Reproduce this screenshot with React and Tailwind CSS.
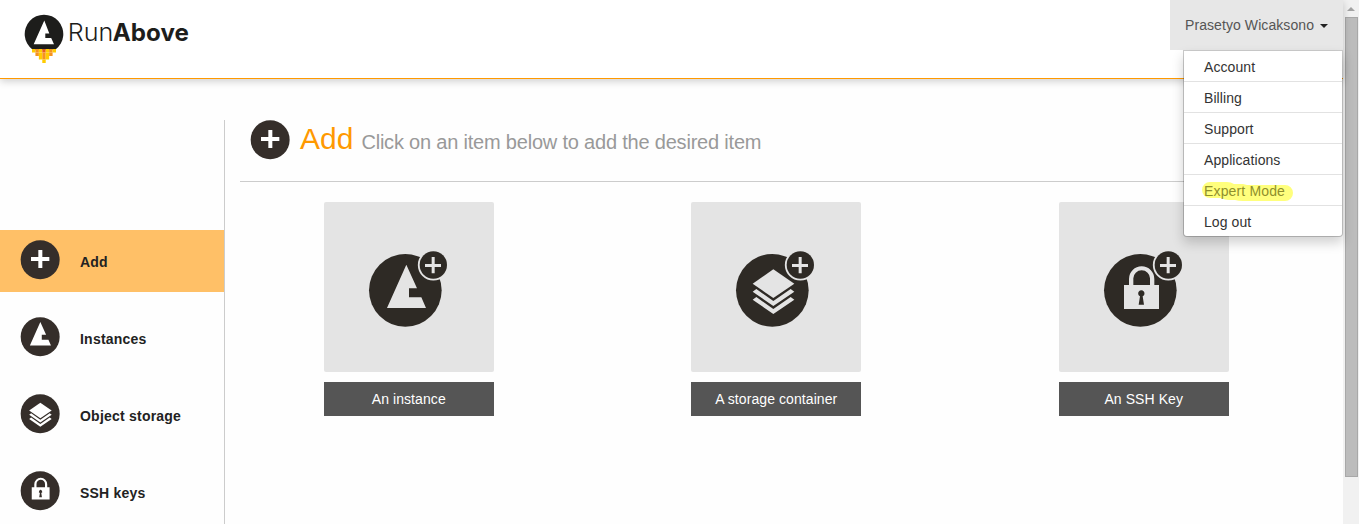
import React from "react";

const LARGE_GLYPHS = {
  instance: <path d="M247 188 L189 318 H306 L292 286 H255 V259 H279 Z" />,
  storage: (
    <>
      <path d="M247 202 L310 245 L247 288 L185 245 Z" />
      <path d="M185 269 L196 261 L247 297 L299 261 L310 269 L247 312 Z" />
      <path d="M185 293 L196 285 L247 321 L299 285 L310 293 L247 336 Z" />
    </>
  ),
  key: (
    <path
      fillRule="evenodd"
      d="M195 249 H210 V231 A38 38 0 0 1 286 231 V249 H300 V321 H195 Z M223 249 H273 V229 A25 24 0 0 0 223 229 Z M243 283 L239 308 H255 L251 283 A9.500 9.500 0 1 0 243 283 Z"
    />
  ),
};

const SMALL_TRANSFORMS = {
  instance: "translate(61 15) scale(.54) translate(-247 -188)",
  storage: "translate(61 26) scale(.54) translate(-247 -202)",
  key: "translate(62 49) scale(.51) translate(-247.5 -249)",
};

function RoundIcon({ name }) {
  return (
    <svg viewBox="0 0 120 120" className="size-10 shrink-0">
      <circle cx="60.5" cy="59.500" r="58.500" fill="#352e2a" />
      {name === "add" ? (
        <path d="M33 51 H55 V30 H67 V51 H88 V63 H67 V84 H55 V63 H33 Z" fill="#fff" />
      ) : (
        <g fill="#fff" transform={SMALL_TRANSFORMS[name]}>
          {LARGE_GLYPHS[name]}
        </g>
      )}
    </svg>
  );
}

function Tile({ name, label }) {
  return (
    <div className="flex flex-1 flex-col items-center gap-2.5">
      <div className="size-[170px] rounded-xs bg-[#e4e4e4]">
        <svg viewBox="0 0 510 510" className="size-[170px]">
          <circle cx="244" cy="265" r="109" fill="#2e2a25" />
          <g fill="#e4e4e4">{LARGE_GLYPHS[name]}</g>
          <circle cx="328" cy="189" r="46.500" fill="#e4e4e4" />
          <circle cx="328" cy="189" r="41" fill="#2e2a25" />
          <path d="M303 186 H323 V165 H332 V186 H351 V195 H332 V214 H323 V195 H303 Z" fill="#e4e4e4" />
        </svg>
      </div>
      <div className="flex h-[34px] w-[170px] items-center justify-center bg-[#555] text-sm tracking-[0.08px] text-white">
        {label}
      </div>
    </div>
  );
}

const FLAMES = ["YOYRYOY", " OYOYO ", "  YOY  ", "   Y   "];
const FLAME_COLORS = { Y: "#ffcc00", O: "#f5931e", R: "#e8591f" };

function Logo() {
  return (
    <svg width="175" height="56" viewBox="20 10 175 56">
      <path d="M32.500 49.500 A19.300 19.300 0 1 1 55.500 49.500 Z" fill="#1d1d1b" />
      <path d="M44.300 20.500 L33.700 44.200 H54 L51.200 38 H45.300 V33.400 H49.300 Z" fill="#fff" />
      {FLAMES.map((row, y) =>
        [...row].map((cell, x) =>
          cell === " " ? null : (
            <rect
              key={`${x}-${y}`}
              x={32 + x * 3.43}
              y={49 + y * 3.5}
              width="3.43"
              height="3.5"
              fill={FLAME_COLORS[cell]}
            />
          )
        )
      )}
      <text x="67.800" y="41" textLength="45.500" lengthAdjust="spacingAndGlyphs" className="font-['Inter'] text-[24px] font-light" fill="#1d1d1b">
        Run
      </text>
      <text x="112.800" y="41" textLength="76" lengthAdjust="spacingAndGlyphs" className="font-['Inter'] text-[24px] font-bold" fill="#1d1d1b">
        Above
      </text>
    </svg>
  );
}

const NAV = [
  { name: "add", label: "Add", active: true },
  { name: "instance", label: "Instances" },
  { name: "storage", label: "Object storage" },
  { name: "key", label: "SSH keys" },
];

const MENU = ["Account", "Billing", "Support", "Applications", "Expert Mode", "Log out"];

function UserMenu() {
  return (
    <div className="relative h-[50px] w-[173px] bg-[#e7e7e7]">
      <button className="flex h-[50px] items-center gap-1.5 pl-[15px] text-sm tracking-[0.08px] whitespace-nowrap text-[#555]">
        Prasetyo Wicaksono
        <span className="mt-0.5 border-x-4 border-t-4 border-x-transparent border-t-[#222]" />
      </button>
      <ul className="absolute top-[50px] right-0 z-10 w-40 rounded-b border border-black/20 bg-white bg-clip-padding text-sm tracking-[0.08px] text-[#333] shadow-[0_6px_12px_rgba(0,0,0,0.175)]">
        {MENU.map((item) => (
          <li key={item} className="relative h-[31px] border-b border-[#e2e2e2] pt-[6px] pl-5 leading-5 last:h-[30px] last:border-b-0">
            {item === "Expert Mode" ? (
              <>
                <svg className="absolute top-1 left-[17px]" width="94" height="24">
                  <path
                    d="M9 3 H26 Q30 3 33 5 H42 L46 6 H84 A8 8 0 0 1 84 22 H42 Q37 22 34 21 H28 Q24 21 20 19 H9 A8 8 0 0 1 9 3 Z"
                    fill="#ffff7d"
                  />
                </svg>
                <span className="relative tracking-[0.15px] text-[#8f8f2c]">{item}</span>
              </>
            ) : (
              item
            )}
          </li>
        ))}
      </ul>
    </div>
  );
}

export default function App() {
  return (
    <div className="flex h-[524px] w-[1359px] overflow-hidden bg-[#fefefe] font-['Liberation_Sans',Arial,sans-serif]">
      <div className="flex w-[1343px] flex-col">
        <header className="relative z-10 flex h-[79px] shrink-0 justify-between border-b border-[#ff9900] bg-white shadow-[0_2px_8px_rgba(0,0,0,0.2)]">
          <div className="pt-2.5 pl-5">
            <Logo />
          </div>
          <UserMenu />
        </header>
        <div className="flex pt-[41px]">
          <nav className="flex h-[404px] w-[225px] shrink-0 flex-col gap-[15px] border-r border-[#ccc] pt-[110px]">
            {NAV.map(({ name, label, active }) => (
              <a
                key={name}
                className={`flex h-[62px] shrink-0 items-center gap-5 pb-0.5 pl-5 text-sm font-bold tracking-[0.22px] text-[#222] ${active ? "bg-[#ffc067]" : ""}`}
              >
                <RoundIcon name={name} />
                <span className="pt-1">{label}</span>
              </a>
            ))}
          </nav>
          <main className="flex-1">
            <div className="mr-[30px] ml-[15px] flex h-[62px] items-start border-b border-[#ccc] pl-2.5">
              <RoundIcon name="add" />
              <h1 className="ml-2.5 flex items-baseline gap-2 pt-px leading-9">
                <span className="text-[30px] text-[#ff9900]">Add</span>
                <span className="text-xl tracking-[-0.2px] text-[#999]">Click on an item below to add the desired item</span>
              </h1>
            </div>
            <div className="mr-[15.5px] flex pt-5">
              <Tile name="instance" label="An instance" />
              <Tile name="storage" label="A storage container" />
              <Tile name="key" label="An SSH Key" />
            </div>
          </main>
        </div>
      </div>
      <div className="flex w-4 flex-col items-center bg-[#f1f1f1]">
        <div className="flex h-[17px] items-center">
          <span className="border-x-4 border-b-4 border-x-transparent border-b-[#a3a3a3]" />
        </div>
        <div className="ml-px h-[460px] w-[13px] border border-[#a8a8a8] bg-[#bcbcbc]" />
      </div>
    </div>
  );
}
